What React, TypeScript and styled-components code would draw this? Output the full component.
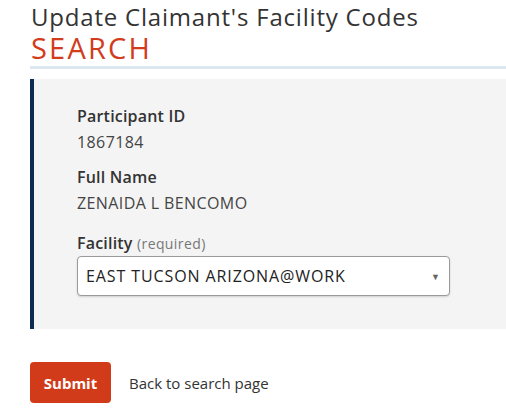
import React from "react";
import styled, { createGlobalStyle } from "styled-components";

const Global = createGlobalStyle`
  html, body { margin: 0; padding: 0; background: #fff; }
  body { font-family: "Open Sans", "Liberation Sans", sans-serif; color: #333; }
  * { box-sizing: border-box; }
`;

const Page = styled.div`
  padding: 3px 0 0 30px;
  width: 506px;
`;

const Title = styled.h1`
  margin: 0;
  font-size: 24px;
  font-weight: 400;
  line-height: 28px;
  letter-spacing: 0.8px;
  color: #333;
  padding-left: 1px;
`;

const Subtitle = styled.h2`
  margin: 0;
  font-size: 29px;
  font-weight: 400;
  line-height: 33px;
  letter-spacing: 2.2px;
  color: #d23c1c;
  padding-left: 1px;
`;

const Divider = styled.div`
  height: 3px;
  background: #dce7f2;
  margin-top: 2px;
`;

const Panel = styled.section`
  margin-top: 10px;
  background: #f4f4f4;
  border-left: 4px solid #0d2a50;
  padding: 25px 56px 33px 43px;
  display: flex;
  flex-direction: column;
  gap: 10px;
`;

const Field = styled.div<{ $extra?: number }>`
  display: flex;
  flex-direction: column;
  margin-top: ${(p) => p.$extra ?? 0}px;
`;

const Label = styled.div`
  font-size: 16px;
  font-weight: 600;
  color: #333;
  line-height: 25px;
  letter-spacing: 0.2px;
`;

const Hint = styled.span`
  font-size: 14px;
  font-weight: 400;
  color: #777;
  letter-spacing: 0.4px;
`;

const Value = styled.div`
  font-size: 16px;
  color: #444;
  line-height: 26px;
  letter-spacing: 0.4px;
`;

const SelectBox = styled.div`
  width: 373px;
  height: 40px;
  background: #fff;
  border: 1px solid #9a9a9a;
  border-radius: 4px;
  box-shadow: 0 1px 2px rgba(0, 0, 0, 0.15);
  display: flex;
  align-items: center;
  justify-content: space-between;
  padding: 0 9px 0 8px;
  font-size: 16px;
  letter-spacing: 0.9px;
  color: #222;
`;

const Arrow = styled.span`
  font-size: 9px;
  color: #666;
  letter-spacing: 0;
`;

const Actions = styled.div`
  margin-top: 33px;
  display: flex;
  align-items: center;
  gap: 18px;
`;

const Submit = styled.button`
  width: 81px;
  height: 41px;
  border: none;
  border-radius: 4px;
  background: #d13b1a;
  color: #fff;
  font-family: inherit;
  font-size: 15px;
  font-weight: 700;
`;

const BackLink = styled.a`
  font-size: 15px;
  color: #333;
  text-decoration: none;
`;

export default function App() {
  return (
    <>
      <Global />
      <Page>
        <Title>Update Claimant's Facility Codes</Title>
        <Subtitle>SEARCH</Subtitle>
        <Divider />
        <Panel>
          <Field>
            <Label>Participant ID</Label>
            <Value>1867184</Value>
          </Field>
          <Field>
            <Label>Full Name</Label>
            <Value>ZENAIDA L BENCOMO</Value>
          </Field>
          <Field $extra={5}>
            <Label>
              Facility <Hint>(required)</Hint>
            </Label>
            <SelectBox>
              <span>EAST TUCSON ARIZONA@WORK</span>
              <Arrow>▼</Arrow>
            </SelectBox>
          </Field>
        </Panel>
        <Actions>
          <Submit>Submit</Submit>
          <BackLink href="#">Back to search page</BackLink>
        </Actions>
      </Page>
    </>
  );
}
